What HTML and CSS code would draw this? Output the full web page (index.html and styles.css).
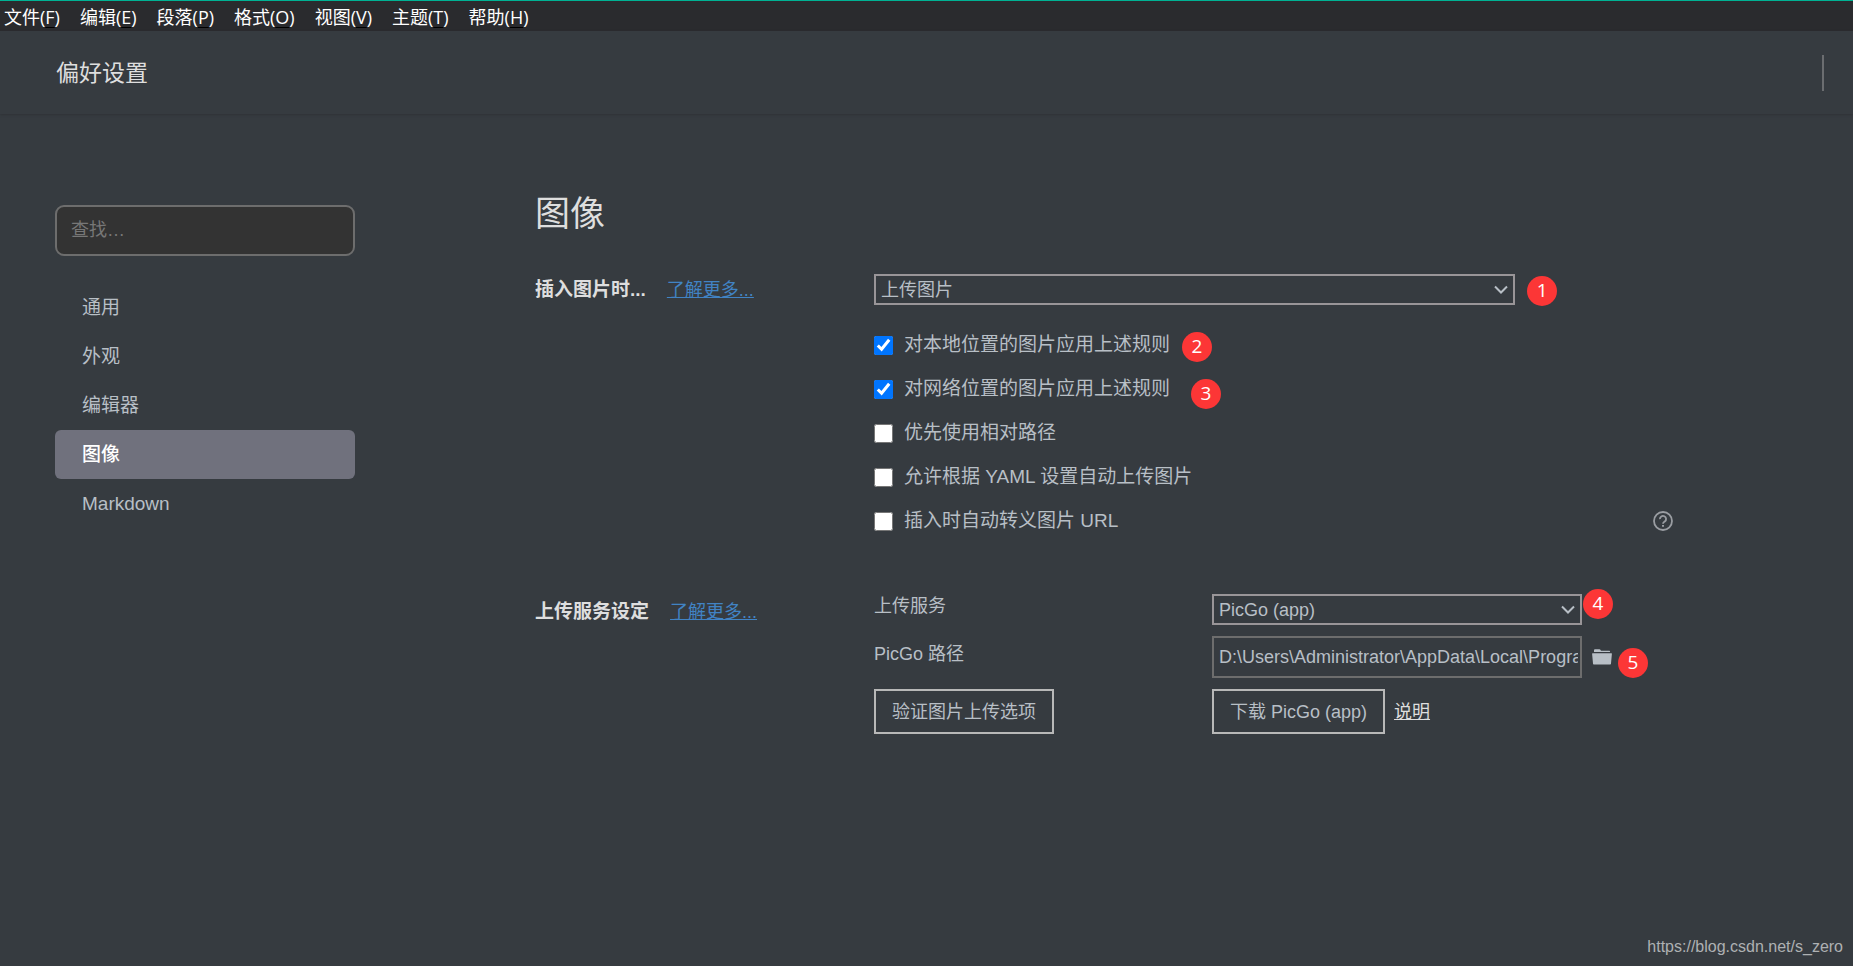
FILE: index.html
```html
<!DOCTYPE html>
<html lang="zh-CN">
<head>
<meta charset="utf-8">
<title>偏好设置</title>
<link rel="stylesheet" href="styles.css">
</head>
<body>
<nav class="menubar">
  <button class="menu" type="button">文件(<u>F</u>)</button>
  <button class="menu" type="button">编辑(<u>E</u>)</button>
  <button class="menu" type="button">段落(<u>P</u>)</button>
  <button class="menu" type="button">格式(<u>O</u>)</button>
  <button class="menu" type="button">视图(<u>V</u>)</button>
  <button class="menu" type="button">主题(<u>T</u>)</button>
  <button class="menu" type="button">帮助(<u>H</u>)</button>
</nav>
<header class="header">
  <h1 class="title">偏好设置</h1>
  <span class="divider"></span>
</header>
<div class="page">
  <aside class="sidebar">
    <input class="search" type="search" placeholder="查找…" aria-label="查找">
    <nav class="nav">
      <a class="nav-item" href="#general">通用</a>
      <a class="nav-item" href="#appearance">外观</a>
      <a class="nav-item" href="#editor">编辑器</a>
      <a class="nav-item active" href="#image">图像</a>
      <a class="nav-item" href="#markdown">Markdown</a>
    </nav>
  </aside>
  <main class="content">
    <h2 class="heading">图像</h2>
    <section class="group">
      <div class="group-label">
        <h3 class="group-title">插入图片时...</h3>
        <a class="more" href="#insert">了解更多...</a>
      </div>
      <div class="group-body">
        <div class="select-box wide">
          <select class="select" aria-label="插入图片时"><option>上传图片</option></select>
          <svg class="chevron" viewBox="0 0 14 10"><path d="M1 1.5 7 7.5 13 1.5"/></svg>
          <span class="badge badge-1">1</span>
        </div>
        <div class="checks">
          <div class="check-row"><label class="check"><input type="checkbox" checked>对本地位置的图片应用上述规则</label><span class="badge badge-2">2</span></div>
          <div class="check-row"><label class="check"><input type="checkbox" checked>对网络位置的图片应用上述规则</label><span class="badge badge-3">3</span></div>
          <div class="check-row"><label class="check"><input type="checkbox">优先使用相对路径</label></div>
          <div class="check-row"><label class="check"><input type="checkbox">允许根据 YAML 设置自动上传图片</label></div>
          <div class="check-row"><label class="check"><input type="checkbox">插入时自动转义图片 URL</label>
            <button class="icon-button help" type="button" aria-label="帮助">
              <svg width="20" height="20" viewBox="0 0 20 20"><circle cx="10" cy="10" r="9" fill="none" stroke="currentColor" stroke-width="1.8"/><path d="M6.9 8.1a3.1 3.1 0 1 1 4.9 2.4c-1 .7-1.8 1.2-1.8 2.3" fill="none" stroke="currentColor" stroke-width="1.8"/><path d="M9 14h2v1.8H9z" fill="currentColor"/></svg>
            </button>
          </div>
        </div>
      </div>
    </section>
    <section class="group upload">
      <div class="group-label">
        <h3 class="group-title">上传服务设定</h3>
        <a class="more" href="#upload">了解更多...</a>
      </div>
      <div class="group-body form">
        <label class="field-label" for="service">上传服务</label>
        <div class="select-box">
          <select class="select" id="service"><option>PicGo (app)</option></select>
          <svg class="chevron" viewBox="0 0 14 10"><path d="M1 1.5 7 7.5 13 1.5"/></svg>
          <span class="badge badge-4">4</span>
        </div>
        <span></span>
        <label class="field-label tall" for="path">PicGo 路径</label>
        <input class="path" id="path" type="text" value="D:\Users\Administrator\AppData\Local\Programs\PicGo\PicGo.exe">
        <div class="browse">
          <button class="icon-button" type="button" aria-label="选择路径">
            <svg width="20" height="16" viewBox="0 0 20 16"><path d="M2 3V1.6C2 .8 2.5.3 3.2.3h4.2c.6 0 .9.3 1.2.8l.3.7h8c.8 0 1.2.5 1.2 1.2H2zM.6 4.2h18.8c.4 0 .6.2.5.6L19 14.6c0 .6-.5 1-1 1H2c-.5 0-1-.4-1-1L.1 4.8c0-.4.1-.6.5-.6z" fill="currentColor"/></svg>
          </button>
          <span class="badge badge-5">5</span>
        </div>
        <div><button class="button" type="button">验证图片上传选项</button></div>
        <div class="actions">
          <button class="button" type="button">下载 PicGo (app)</button>
          <a class="doc" href="#doc">说明</a>
        </div>
      </div>
    </section>
  </main>
</div>
<footer class="footer">https://blog.csdn.net/s_zero</footer>
</body>
</html>
```

FILE: styles.css
```css
* { box-sizing: border-box; }

body {
  margin: 0;
  min-height: 100vh;
  display: flex;
  flex-direction: column;
  background: #363b40;
  color: #b8bfc6;
  font-family: "Liberation Sans", "Noto Sans CJK SC", sans-serif;
  font-size: 18px;
  line-height: 24px;
}

button, input, select { font: inherit; color: inherit; }
h1, h2, h3 { margin: 0; }

.menubar {
  display: flex;
  gap: 20px;
  height: 31px;
  padding: 2px 4px 0;
  border-top: 1px solid #00b294;
  background: #2a2b2e;
}
.menu {
  padding: 0;
  border: 0;
  background: none;
  color: #fff;
  font-family: "Open Sans", "Noto Sans CJK SC", sans-serif;
}
.menu u { text-decoration-color: #000; text-underline-offset: 3px; }

.header {
  display: flex;
  align-items: center;
  justify-content: space-between;
  height: 83px;
  padding: 0 29px 0 56px;
  box-shadow: 0 1px 2px #303337;
}
.title { color: #dedede; font-size: 23px; font-weight: 400; line-height: 30px; }
.divider { width: 2px; height: 36px; background: #6b6d70; }

.page { flex: 1; display: flex; gap: 180px; padding: 0 180px 0 55px; }

.sidebar { width: 300px; flex: none; padding-top: 91px; }
.search {
  display: block;
  width: 100%;
  height: 51px;
  padding: 0 14px;
  border: 2px solid #6d6d6d;
  border-radius: 9px;
  background: #333;
}
.search::placeholder { color: #777; }
.nav { display: flex; flex-direction: column; margin-top: 27px; }
.nav-item {
  padding: 0 27px;
  border-radius: 6px;
  color: #b8bfc6;
  font-size: 19px;
  line-height: 49px;
  text-decoration: none;
}
.nav-item.active { background: #70717d; color: #fff; font-weight: 500; }

.content { flex: 1; min-width: 0; padding-top: 81px; }
.heading {
  color: #dedede;
  font-size: 35px;
  font-weight: 400;
  line-height: 37px;
}
.group { display: grid; grid-template-columns: 339px 1fr; margin-top: 42px; }
.group-label { display: flex; align-items: baseline; gap: 21px; padding-top: 2px; }
.group-title { color: #dedede; font-size: 19px; line-height: 28px; }
.more { color: #4183c4; text-decoration-skip-ink: none; }

.select-box { position: relative; }
.wide { width: calc(80% + 2px); }
.select {
  display: block;
  width: 100%;
  height: 31px;
  padding: 0 5px;
  border: 2px solid #999598;
  border-radius: 0;
  background: none;
  appearance: none;
}
.chevron {
  position: absolute;
  right: 7px;
  top: 11px;
  width: 14px;
  height: 10px;
  fill: none;
  stroke: #b8bfc6;
  stroke-width: 2;
  pointer-events: none;
}

.checks { display: flex; flex-direction: column; gap: 16px; margin-top: 26px; }
.check-row { position: relative; display: flex; align-items: center; }
.check { display: flex; align-items: center; gap: 11px; font-size: 19px; line-height: 28px; }
.check input { width: 19px; height: 19px; margin: 0; }
.icon-button { display: flex; padding: 0; border: 0; background: none; }
.help { margin-left: auto; color: #9a9da2; }

.upload { margin-top: 59px; }
.upload .group-label { padding-top: 4px; }
.form {
  display: grid;
  grid-template-columns: 338px minmax(0, 370px) 1fr;
  row-gap: 11px;
}
.path {
  width: 100%;
  height: 42px;
  padding: 0 2px 0 5px;
  border: 2px solid #6d6d6d;
  background: none;
}
.field-label.tall { padding-top: 6px; }
.browse { position: relative; display: flex; align-items: center; padding-left: 10px; }
.button {
  height: 45px;
  padding: 0 16px;
  border: 2px solid #b8b8b8;
  background: none;
  white-space: nowrap;
}
.actions { display: flex; align-items: center; gap: 9px; }
.doc { color: #dedede; }

.badge {
  position: absolute;
  width: 30px;
  height: 30px;
  border-radius: 50%;
  background: #fc3636;
  color: #fff;
  font-family: "Open Sans", sans-serif;
  font-size: 19px;
  line-height: 28px;
  text-align: center;
}
.badge-1 { left: calc(100% + 12px); top: 2px; }
.badge-2 { left: 308px; top: 1px; }
.badge-3 { left: 317px; top: 4px; }
.badge-4 { left: calc(100% + 1px); top: -5px; }
.badge-5 { left: 36px; top: 12px; }

.footer {
  padding: 0 10px 7px;
  color: #aeb1b3;
  font-size: 16px;
  line-height: 24px;
  text-align: right;
}
```
